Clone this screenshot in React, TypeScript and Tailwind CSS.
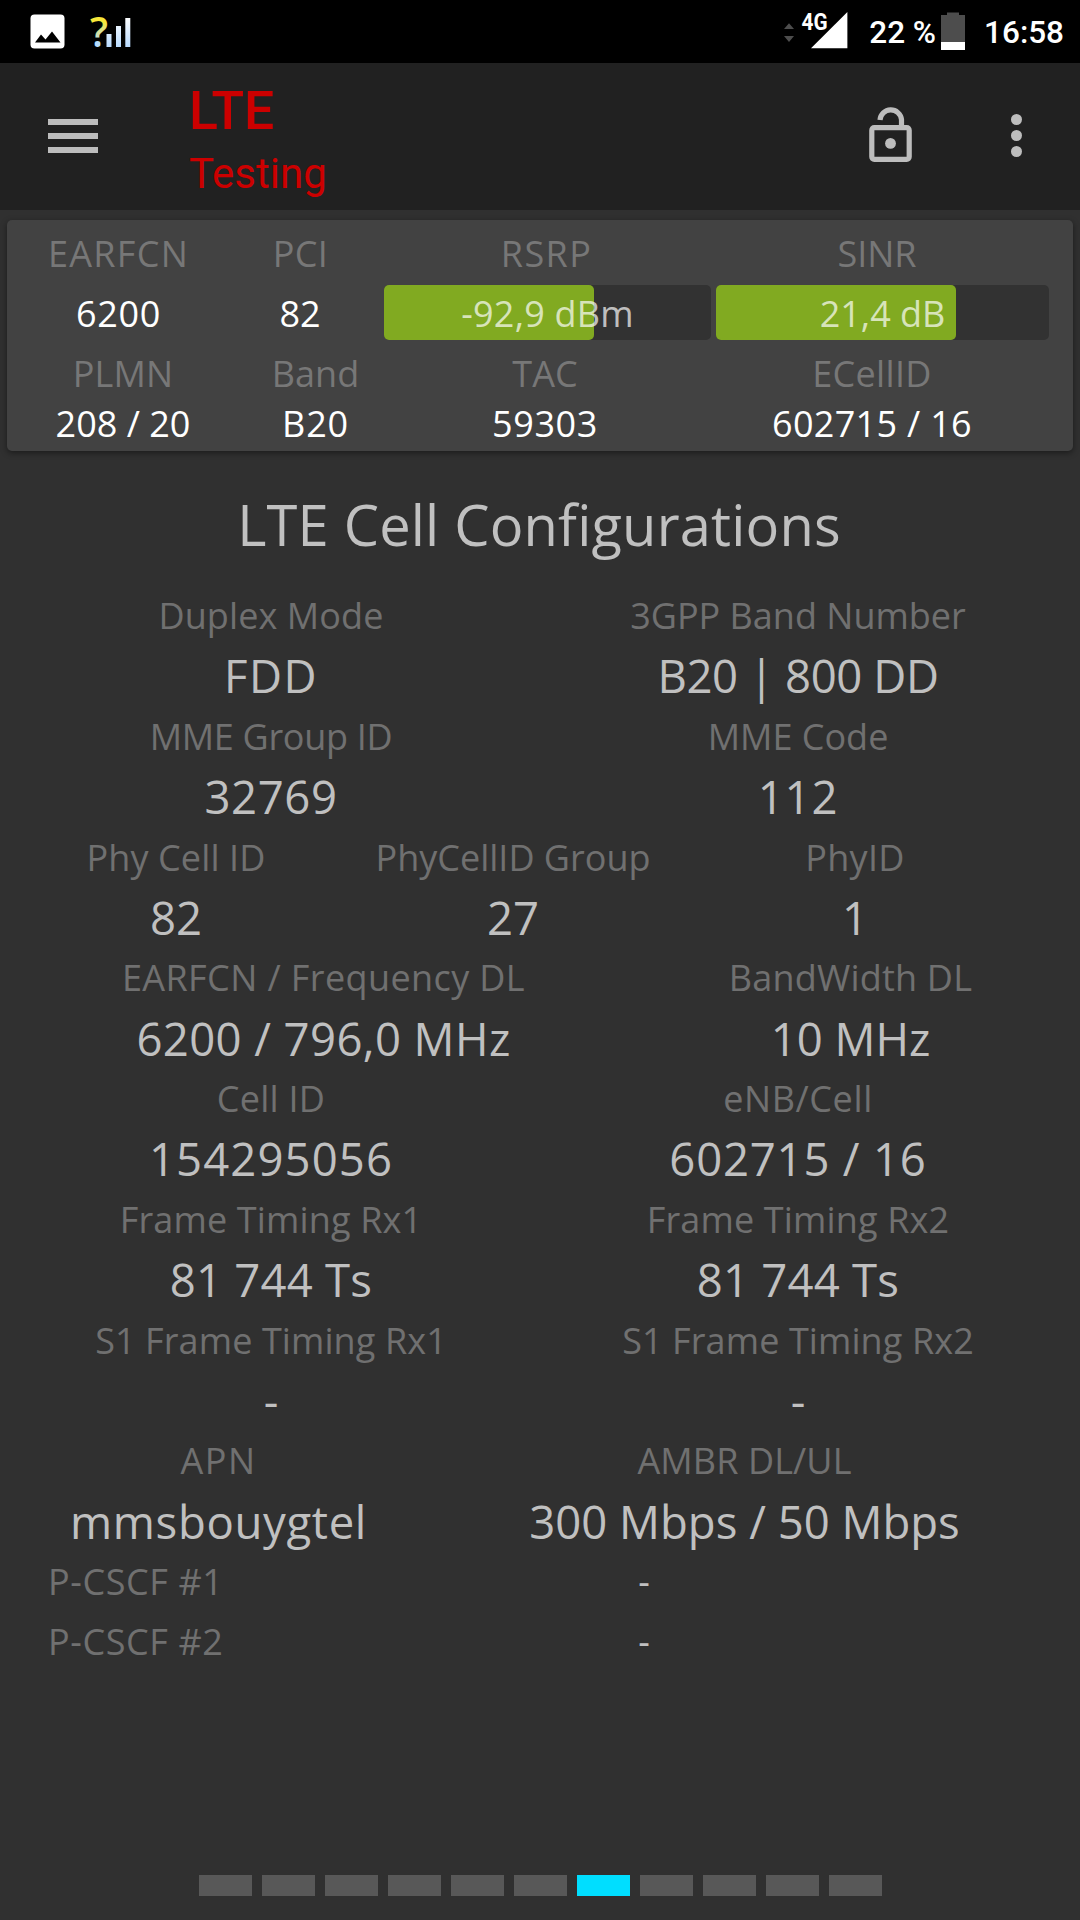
import { clsx } from "clsx";

type Item = {
  label: string;
  value: string;
  width: string;
  labelTrack?: string;
  valueTrack?: string;
};

const configRows: Item[][] = [
  [
    { label: "Duplex Mode", value: "FDD", width: "w-[446px]", labelTrack: "tracking-[0.1px]", valueTrack: "tracking-[1.5px]" },
    { label: "3GPP Band Number", value: "B20 | 800 DD", width: "w-[468px]", valueTrack: "tracking-[-0.4px]" },
  ],
  [
    { label: "MME Group ID", value: "32769", width: "w-[446px]", labelTrack: "tracking-[-0.3px]", valueTrack: "tracking-[0.6px]" },
    { label: "MME Code", value: "112", width: "w-[468px]", valueTrack: "tracking-[0.8px]" },
  ],
  [
    { label: "Phy Cell ID", value: "82", width: "w-[256px]", labelTrack: "tracking-[0.1px]" },
    { label: "PhyCellID Group", value: "27", width: "w-[418px]" },
    { label: "PhyID", value: "1", width: "w-[266px]", labelTrack: "tracking-[0.3px]" },
  ],
  [
    { label: "EARFCN / Frequency DL", value: "6200 / 796,0 MHz", width: "w-[551px]", labelTrack: "tracking-[0.4px]", valueTrack: "tracking-[0.4px]" },
    { label: "BandWidth DL", value: "10 MHz", width: "w-[363px]", labelTrack: "tracking-[0.2px]" },
  ],
  [
    { label: "Cell ID", value: "154295056", width: "w-[446px]", labelTrack: "tracking-[0.25px]", valueTrack: "tracking-[1.1px]" },
    { label: "eNB/Cell", value: "602715 / 16", width: "w-[468px]", labelTrack: "tracking-[0.6px]", valueTrack: "tracking-[0.8px]" },
  ],
  [
    { label: "Frame Timing Rx1", value: "81 744 Ts", width: "w-[446px]", labelTrack: "tracking-[0.15px]", valueTrack: "tracking-[0.2px]" },
    { label: "Frame Timing Rx2", value: "81 744 Ts", width: "w-[468px]", labelTrack: "tracking-[0.15px]", valueTrack: "tracking-[0.2px]" },
  ],
  [
    { label: "S1 Frame Timing Rx1", value: "-", width: "w-[446px]", labelTrack: "tracking-[0.1px]" },
    { label: "S1 Frame Timing Rx2", value: "-", width: "w-[468px]", labelTrack: "tracking-[0.1px]" },
  ],
  [
    { label: "APN", value: "mmsbouygtel", width: "w-[341px]", labelTrack: "tracking-[1.5px]", valueTrack: "tracking-[0.65px]" },
    { label: "AMBR DL/UL", value: "300 Mbps / 50 Mbps", width: "w-[575px]", labelTrack: "tracking-[0.1px]" },
  ],
];

const cellInfo: Item[] = [
  { label: "PLMN", value: "208 / 20", width: "w-[186px]", labelTrack: "tracking-[0.2px]" },
  { label: "Band", value: "B20", width: "w-[199px]", valueTrack: "tracking-[0.8px]" },
  { label: "TAC", value: "59303", width: "w-[260px]", valueTrack: "tracking-[0.6px]" },
  { label: "ECellID", value: "602715 / 16", width: "w-[394px]", labelTrack: "tracking-[0.3px]", valueTrack: "tracking-[0.3px]" },
];

const PAGES = 11;
const ACTIVE_PAGE = 6;

function StatusBar() {
  return (
    <div className="flex h-[63px] shrink-0 items-start bg-black font-['Roboto',sans-serif] text-[31.5px] font-medium text-white">
      <svg className="ml-[30px] mt-3.5" width="35" height="35" viewBox="0 0 35 35">
        <rect x="0.5" y="0.5" width="34" height="34" rx="4" fill="#fff" />
        <path d="M5 28.5 11 20.5 15.5 25.5 22 17.5 30.5 28.5Z" fill="#000" />
      </svg>
      <svg className="ml-[22px]" width="50" height="63" viewBox="-4 -12 50 63">
        <defs>
          <linearGradient id="question" gradientUnits="userSpaceOnUse" x1="0" y1="4" x2="0" y2="35">
            <stop offset="0.2" stopColor="#f7e63a" />
            <stop offset="0.85" stopColor="#b5dcff" />
          </linearGradient>
          <linearGradient id="bars" gradientUnits="userSpaceOnUse" x1="0" y1="5" x2="0" y2="35">
            <stop offset="0" stopColor="#fff" />
            <stop offset="1" stopColor="#b9dbff" />
          </linearGradient>
        </defs>
        <text x="-1" y="34.5" fontFamily="Open Sans" fontWeight="600" fontSize="42" textLength="18" lengthAdjust="spacingAndGlyphs" fill="url(#question)">
          ?
        </text>
        <g fill="url(#bars)">
          <rect x="15.5" y="22" width="5" height="13" />
          <rect x="25" y="14" width="5" height="21" />
          <rect x="34.3" y="6" width="5" height="29" />
        </g>
      </svg>

      <div className="ml-auto flex items-start pr-4">
        <svg width="66" height="60" viewBox="782 0 66 60">
          <path d="M784 29 789 23.3 794 29ZM784 36 789 42 794 36Z" fill="#4d4d4d" />
          <path d="M811 48.3 847.4 12V48.3Z" fill="#fff" />
          <text x="801.5" y="29.8" fontFamily="Roboto" fontWeight="700" fontSize="23.5" textLength="26" lengthAdjust="spacingAndGlyphs" fill="#fff">
            4G
          </text>
        </svg>
        <span className="ml-[21px] h-[63px] leading-[66px]">22 %</span>
        <svg className="ml-[5px] mt-3" width="24" height="38" viewBox="0 0 24 38">
          <path d="M0 3H6V0.5H18V3H24V38H0Z" fill="#4d4d4d" />
          <path d="M0 30H24V38H0Z" fill="#fff" />
        </svg>
        <span className="ml-[19px] h-[63px] leading-[65px]">16:58</span>
      </div>
    </div>
  );
}

function Header() {
  return (
    <header className="flex h-[147px] shrink-0 items-center bg-[#212121] pb-0.5 font-['Roboto',sans-serif] text-[#cc0000]">
      <button type="button" aria-label="Menu" className="ml-12 flex w-[50px] flex-col gap-2">
        <span className="h-1.5 bg-[#bdbdbd]" />
        <span className="h-1.5 bg-[#bdbdbd]" />
        <span className="h-1.5 bg-[#bdbdbd]" />
      </button>
      <div className="ml-[91px] mt-3 flex flex-col">
        <span className="text-[53.5px] font-medium leading-[64px]">LTE</span>
        <span className="text-[42px] leading-[62px]">Testing</span>
      </div>
      <svg className="ml-auto" width="50" height="62" viewBox="865 105 50 62" fill="none">
        <rect x="871.8" y="127.7" width="37.4" height="31.6" rx="2.5" stroke="#bdbdbd" strokeWidth="5.2" />
        <path d="M880 120A10.8 10.8 0 0 1 901.5 119.5V127" stroke="#bdbdbd" strokeWidth="5.2" />
        <circle cx="890.5" cy="143.4" r="5.4" fill="#bdbdbd" />
      </svg>
      <button type="button" aria-label="More" className="ml-24 mr-[58px] flex w-[11px] flex-col gap-[5px]">
        <span className="size-[11px] rounded-full bg-[#bdbdbd]" />
        <span className="size-[11px] rounded-full bg-[#bdbdbd]" />
        <span className="size-[11px] rounded-full bg-[#bdbdbd]" />
      </button>
    </header>
  );
}

function SignalBar({ value, fill, className }: { value: string; fill: number; className: string }) {
  return (
    <div className={clsx("relative h-[55px] rounded-[5px] bg-[#323232]", className)}>
      <div className="h-full rounded-[5px] bg-[#81aa21]" style={{ width: `${fill}%` }} />
      <span className="absolute inset-0 text-center leading-[57px] text-white/70">{value}</span>
    </div>
  );
}

function CellCard() {
  return (
    <section className="mx-[7px] mt-2.5 h-[231px] shrink-0 rounded-[5px] bg-[#424242] pl-[23px] text-center text-[36px] text-white shadow-[0_2px_6px_rgba(0,0,0,0.45)]">
      <div className="flex h-[65px] leading-[68px] text-[#777777]">
        <span className="w-[177px] tracking-[1.3px]">EARFCN</span>
        <span className="ml-[9px] w-[169px] tracking-[0.3px]">PCI</span>
        <span className="w-[323px] tracking-[1.4px]">RSRP</span>
        <span className="ml-2 w-[322px]">SINR</span>
      </div>
      <div className="flex h-[55px] leading-[58px]">
        <span className="w-[177px] tracking-[0.7px]">6200</span>
        <span className="ml-[9px] w-[168px]">82</span>
        <SignalBar value="-92,9 dBm" fill={64.2} className="w-[327px] tracking-[0.2px]" />
        <SignalBar value="21,4 dB" fill={72} className="ml-[5px] w-[333px]" />
      </div>
      <div className="flex">
        {cellInfo.map((c) => (
          <div key={c.label} className={clsx("flex flex-col", c.width)}>
            <span className={clsx("h-[66px] leading-[68px] text-[#777777]", c.labelTrack)}>{c.label}</span>
            <span className={clsx("leading-[36px]", c.valueTrack)}>{c.value}</span>
          </div>
        ))}
      </div>
    </section>
  );
}

export default function App() {
  return (
    <div className="flex h-[1920px] w-[1080px] flex-col overflow-hidden bg-[#303030] font-['Open_Sans',sans-serif] text-[#c0c0c0]">
      <StatusBar />
      <Header />
      <CellCard />

      <main className="mt-[13px] px-12">
        <h1 className="h-[121px] pr-0.5 text-center text-[56px] leading-[121px] tracking-[0.2px]">LTE Cell Configurations</h1>
        {configRows.map((row) => (
          <div key={row[0].label} className="flex">
            {row.map((item, i) => (
              <div
                key={item.label}
                className={clsx("flex flex-col text-center", item.width, row.length === 2 && i === 1 && "ml-auto")}
              >
                <span className={clsx("h-[60.375px] text-[36px] leading-[62px] text-[#707070]", item.labelTrack)}>{item.label}</span>
                <span className={clsx("h-[60.375px] text-[45.5px] leading-[60px]", item.valueTrack)}>{item.value}</span>
              </div>
            ))}
          </div>
        ))}
        {["P-CSCF #1", "P-CSCF #2"].map((name) => (
          <div key={name} className="flex h-[60.375px] text-[36px] leading-[62px]">
            <span className="w-[208px] tracking-[0.6px] text-[#707070]">{name}</span>
            <span className="flex-1 text-center">-</span>
          </div>
        ))}
      </main>

      {/* Page indicator */}
      <div className="mb-6 mt-auto flex justify-center gap-2.5">
        {Array.from({ length: PAGES }, (_, i) => (
          <span key={i} className={clsx("h-[21px] w-[53px]", i === ACTIVE_PAGE ? "bg-[#00deff]" : "bg-[#585858]")} />
        ))}
      </div>
    </div>
  );
}
